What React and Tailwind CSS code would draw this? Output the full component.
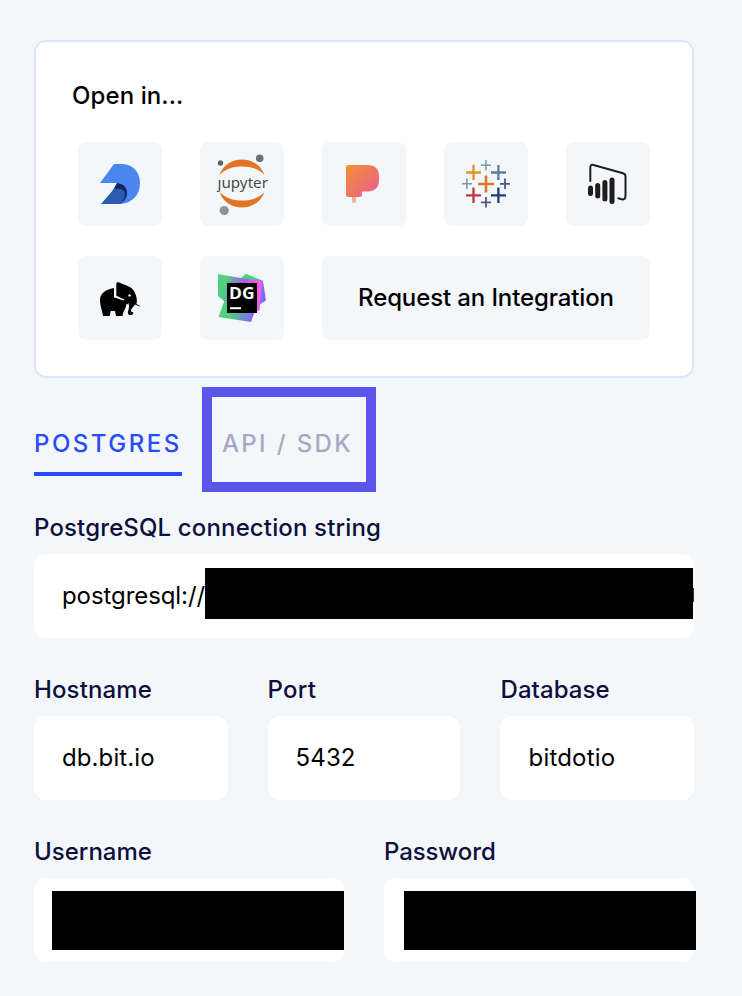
import React from "react";

function DeepnoteIcon() {
  return (
    <svg viewBox="0 0 84 84" className="size-full">
      <path d="M36 22H43C54 22 62 29 62 41C62 53 54 61 43 62L40 61C48 55 49 43 37 41H22Z" fill="#4a86ee" />
      <path d="M39 41C46 42 49 46 49 51C49 56 46 60 41 62L34 50Z" fill="#152460" />
      <path d="M36 47C43 46 47 48 47 52C47 57 44 62 39 62H23Z" fill="#2a5caf" />
    </svg>
  );
}

function JupyterIcon() {
  return (
    <svg viewBox="0 0 84 84" className="size-full">
      <path d="M19.500 33C23 23 32 17.500 42 17.500C52 17.500 61 23 64.500 33C59 27 51 24.500 42 24.500C33 24.500 25 27 19.500 33Z" fill="#e37426" />
      <path d="M19.500 50C23 60 32 65.500 42 65.500C52 65.500 61 60 64.500 50C59 56 51 58.500 42 58.500C33 58.500 25 56 19.500 50Z" fill="#e37426" />
      <circle cx="20.500" cy="21" r="2.700" fill="#616262" />
      <circle cx="59.700" cy="16.200" r="3.800" fill="#6d6d6d" />
      <circle cx="24.200" cy="68.500" r="4.600" fill="#929292" />
      <text x="17.500" y="46" textLength="50.500" lengthAdjust="spacingAndGlyphs" fontFamily="'Noto Sans', 'Open Sans', sans-serif" fontSize="14.500" fill="#4b4b4c">ȷupyter</text>
    </svg>
  );
}

function PopsicleIcon() {
  return (
    <svg viewBox="0 0 84 84" className="size-full">
      <defs>
        <linearGradient id="pop" x1="24" y1="23" x2="51" y2="51" gradientUnits="userSpaceOnUse">
          <stop stopColor="#ef9130" />
          <stop offset="1" stopColor="#ed6588" />
        </linearGradient>
      </defs>
      <path d="M30 54H34V59Q34 61 32 61T30 59Z" fill="#e8b48a" />
      <path d="M26.500 23H46C52.500 23 57 27 57 33V39C57 45.500 52 49.500 46 49.500H40V52.500Q40 55 37.500 55H26.500Q24 55 24 52.500V25.500Q24 23 26.500 23Z" fill="url(#pop)" />
    </svg>
  );
}

function TableauIcon() {
  return (
    <svg viewBox="0 0 84 84" className="size-full" fill="none">
      <path d="M42 33.500V50.500M34 42H50" stroke="#db762e" strokeWidth="2.600" />
      <path d="M29.500 23V38M22 30.500H37" stroke="#e0922e" strokeWidth="2.300" />
      <path d="M54.400 23V38M47 30.500H62" stroke="#5b7f94" strokeWidth="2.300" />
      <path d="M29.500 45.500V61M22 53.400H37" stroke="#bd3541" strokeWidth="2.300" />
      <path d="M54.400 45.500V61M47 53.400H62" stroke="#263a77" strokeWidth="2.300" />
      <path d="M42 18V28.500M37 23.300H47M22.800 36.500V47M18 41.800H28" stroke="#7799a5" strokeWidth="1.500" />
      <path d="M61 36.500V47M56 41.800H66M42 55V65.500M37 60.400H47" stroke="#50578c" strokeWidth="1.800" />
    </svg>
  );
}

function PowerBiIcon() {
  return (
    <svg viewBox="0 0 84 84" className="size-full" fill="none" stroke="#201d1e" strokeLinecap="round">
      <path d="M24.300 39V25.500Q24.300 22.200 27.500 23L57 31.200Q59.500 32 59.500 34.500V53.500Q59.500 58 55.500 57.300L52.300 56.300" strokeWidth="2" />
      <path d="M24.500 46V51.500M31.700 43.500V54M38.900 40.500V57M46 38V59.500" strokeWidth="5" />
    </svg>
  );
}

function ElephantIcon() {
  return (
    <svg viewBox="0 0 84 84" className="size-full">
      <path d="M36 32C27 33.500 22 38 22 44C22 50 24 54 25 60H31.700L32.700 55H37L38 60H44.500C45 55 48 53 48.500 47.500L50.500 49C52 52 49.500 55 50 57.500C51 60 55 59.500 55.500 56.500L53 55.500C52.500 53 56 50 57 48.500L62 50.500L61.500 49.500L58.500 48C59.500 44 58.500 40 56.500 36C54.500 31 49 30 46 28.500L40 26L38.300 27V39.700L46.500 43.500L45.500 44.500L36 41.300Z" fill="#000" />
      <circle cx="51.600" cy="39.400" r="1.200" fill="#fff" />
      <path d="M50.500 47.500L50 51" stroke="#fff" strokeWidth=".8" />
    </svg>
  );
}

function DataGripIcon() {
  return (
    <svg viewBox="0 0 84 84" className="size-full">
      <defs>
        <linearGradient id="dgA" x1="20" y1="30" x2="62" y2="40" gradientUnits="userSpaceOnUse">
          <stop offset=".08" stopColor="#4fd27e" />
          <stop offset=".5" stopColor="#a55ded" />
          <stop offset=".8" stopColor="#ee5de0" />
        </linearGradient>
        <linearGradient id="dgB" x1="24" y1="57" x2="52" y2="63" gradientUnits="userSpaceOnUse">
          <stop offset=".2" stopColor="#4fcf80" />
          <stop offset="1" stopColor="#8467f5" />
        </linearGradient>
        <linearGradient id="dgC" x1="47" y1="18" x2="60" y2="32" gradientUnits="userSpaceOnUse">
          <stop offset=".4" stopColor="#4fcf80" />
          <stop offset="1" stopColor="#7c6bee" />
        </linearGradient>
      </defs>
      <path d="M42 22L46 18L63 25L66 44.500L59 49L45 52Z" fill="url(#dgC)" />
      <path d="M25 43L18.500 61L51 66L56 52Z" fill="url(#dgB)" />
      <path d="M18 18L41 22L62.500 25L59.500 54.500L51 56L25 46L18 40Z" fill="url(#dgA)" />
      <path d="M41 22L46 18L62.500 25Z" fill="url(#dgC)" />
      <path d="M27 27H57V57H27Z" fill="#000" />
      <text x="29" y="43.300" textLength="25.600" lengthAdjust="spacingAndGlyphs" fontFamily="'Open Sans', sans-serif" fontWeight="700" fontSize="16.500" fill="#fff">DG</text>
      <path d="M30 51.200H41V53.200H30Z" fill="#fff" />
    </svg>
  );
}

const icons = [DeepnoteIcon, JupyterIcon, PopsicleIcon, TableauIcon, PowerBiIcon, ElephantIcon, DataGripIcon];

function Field({ label, value, labelClass = "", valueClass = "", children }) {
  return (
    <div className="min-w-0">
      <div className={`mb-2.5 text-2xl leading-8 font-medium whitespace-nowrap text-[#0d0f3d] ${labelClass}`}>{label}</div>
      <div className={`relative flex h-[84px] items-center rounded-xl bg-white px-7 text-2xl text-black ${valueClass}`}>
        {value}
        {children}
      </div>
    </div>
  );
}

export default function App() {
  return (
    <main className="h-[996px] w-[742px] overflow-hidden bg-[#f3f7fa] pt-10 pr-12 pl-[34px] font-['Inter',sans-serif]">
      <section className="h-[338px] rounded-xl border-2 border-[#dce5ff] bg-white px-9 pt-[38px]">
        <h2 className="text-2xl leading-8 font-medium tracking-[0.1px] text-black">Open in...</h2>
        <div className="mt-[30px] ml-1.5 grid w-[572px] grid-cols-[repeat(5,84px)] gap-x-[38px] gap-y-[30px]">
          {icons.map((Icon, i) => (
            <button key={i} className="size-[84px] rounded-lg bg-[#f3f7fa]">
              <Icon />
            </button>
          ))}
          <button className="col-span-3 rounded-lg bg-[#f3f7fa] text-2xl font-medium tracking-[-0.12px] text-black">
            Request an Integration
          </button>
        </div>
      </section>

      <nav className="mt-[38px] flex h-[60px] gap-10 text-2xl leading-14 font-medium">
        <div className="h-[60px] w-[148px] border-b-4 border-[#284bff] tracking-[2.5px] whitespace-nowrap text-[#284bff]">POSTGRES</div>
        <div className="relative tracking-[2.35px] whitespace-nowrap text-[#a9a8c3]">
          API / SDK
          <span className="absolute -top-[29px] -left-[20.500px] h-[105px] w-[174px] border-10 border-[#5b55e9]" />
        </div>
      </nav>

      <div className="mt-9 flex flex-col gap-9">
        <Field label="PostgreSQL connection string" value="postgresql://" labelClass="tracking-[0.14px]" valueClass="tracking-[-0.08px]">
          <span className="absolute top-[14px] right-px h-[51px] w-[488px] bg-black" />
          <span className="absolute top-[34px] right-0 h-[14px] w-px bg-black/80" />
        </Field>
        <div className="grid grid-cols-[193.6px_192.9px_193.5px] gap-x-10">
          <Field label="Hostname" value="db.bit.io" labelClass="tracking-[0.12px]" valueClass="tracking-[0.1px]" />
          <Field label="Port" value="5432" labelClass="tracking-[0.2px]" valueClass="tracking-[0.1px]" />
          <Field label="Database" value="bitdotio" labelClass="tracking-[0.08px]" valueClass="tracking-[0.2px]" />
        </div>
        <div className="grid grid-cols-2 gap-10">
          <Field label="Username">
            <span className="absolute top-[13px] right-0 h-[59px] w-[292px] bg-black" />
          </Field>
          <Field label="Password" labelClass="tracking-[-0.1px]">
            <span className="absolute top-[13px] -right-[2px] h-[59px] w-[292px] bg-black" />
          </Field>
        </div>
      </div>
    </main>
  );
}
